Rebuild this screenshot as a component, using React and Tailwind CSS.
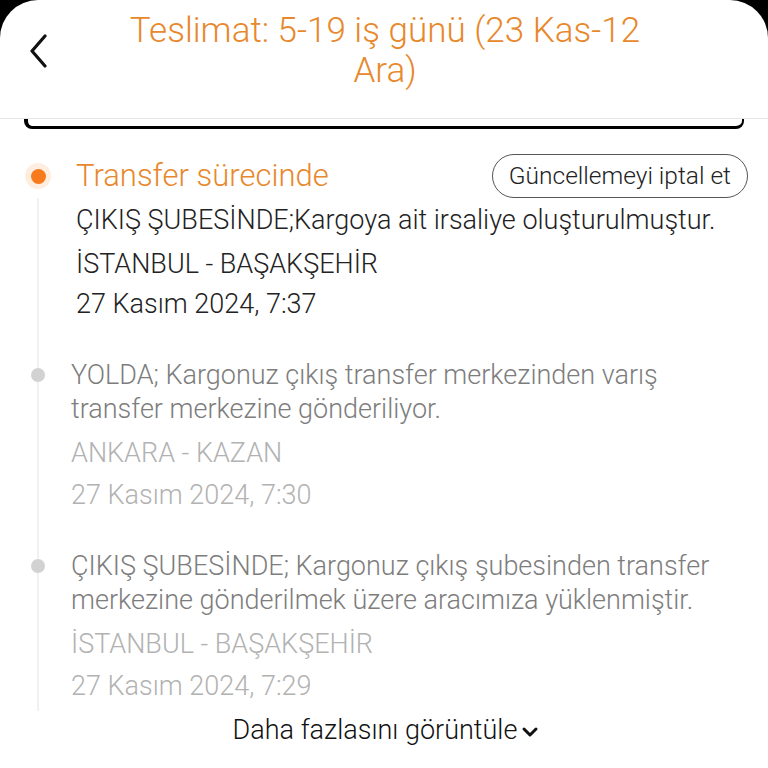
import React from "react";

const EVENTS = [
  {
    desc: ["ÇIKIŞ ŞUBESİNDE;Kargoya ait irsaliye oluşturulmuştur."],
    place: "İSTANBUL - BAŞAKŞEHİR",
    date: "27 Kasım 2024, 7:37",
  },
  {
    desc: ["YOLDA; Kargonuz çıkış transfer merkezinden varış", "transfer merkezine gönderiliyor."],
    place: "ANKARA - KAZAN",
    date: "27 Kasım 2024, 7:30",
  },
  {
    desc: ["ÇIKIŞ ŞUBESİNDE; Kargonuz çıkış şubesinden transfer", "merkezine gönderilmek üzere aracımıza yüklenmiştir."],
    place: "İSTANBUL - BAŞAKŞEHİR",
    date: "27 Kasım 2024, 7:29",
  },
];

function BackIcon() {
  return (
    <svg width="20" height="34" viewBox="0 0 20 34" fill="none">
      <path d="M16 2 L3 17 L16 32" stroke="#111" strokeWidth="3.2" strokeLinecap="round" strokeLinejoin="round" />
    </svg>
  );
}

function ChevronDown() {
  return (
    <svg width="18" height="12" viewBox="0 0 18 12" fill="none">
      <path d="M3 3 L9 9 L15 3" stroke="#111" strokeWidth="3" strokeLinecap="round" strokeLinejoin="round" />
    </svg>
  );
}

export default function App() {
  const [first, ...rest] = EVENTS;
  return (
    <div className="h-[768px] w-[768px] overflow-hidden bg-black font-['Roboto','Noto_Sans',sans-serif] font-light">
      <div className="flex h-full flex-col overflow-hidden rounded-t-[38px] bg-white">
        {/* header */}
        <div className="relative flex h-[119px] shrink-0 items-center justify-center border-b border-[#e6e6e6]">
          <div className="absolute top-[34px] left-[29px]">
            <BackIcon />
          </div>
          <h1 className="mb-[16px] w-[540px] pl-[2px] text-center text-[35px] leading-[40px] font-light text-[#e8882c]">
            Teslimat: 5-19 iş günü (23 Kas-12 Ara)
          </h1>
        </div>

        {/* bottom of the card above */}
        <div className="mx-[24px] h-[10px] shrink-0 rounded-b-[8px] border-r-2 border-b-[3px] border-l-[4px] border-black" />

        {/* timeline */}
        <div className="flex flex-col pt-[25px]">
          <div className="flex">
            <div className="flex w-[76px] shrink-0 flex-col items-center self-stretch">
              <div className="flex h-[44px] items-center">
                <div className="flex h-[26px] w-[26px] items-center justify-center rounded-full bg-[#fdeee0]">
                  <div className="h-[15px] w-[15px] rounded-full bg-[#f77b1c]" />
                </div>
              </div>
              <div className="w-[2px] flex-1 bg-[#f1f1f1]" />
            </div>
            <div className="flex-1 pr-[20px] pb-[32px]">
              <div className="flex h-[44px] items-center justify-between">
                <span className="text-[31px] text-[#e8882c]">Transfer sürecinde</span>
                <button className="h-[44px] rounded-full border border-[#555] px-[16px] text-[24.5px] text-[#222]">
                  Güncellemeyi iptal et
                </button>
              </div>
              {first.desc.map((l) => (
                <p key={l} className="text-[27px] leading-[44px] text-[#222]">{l}</p>
              ))}
              <p className="text-[27px] leading-[44px] text-[#222]">{first.place}</p>
              <p className="-mt-[4px] text-[27px] leading-[44px] text-[#222]">{first.date}</p>
            </div>
          </div>

          {rest.map((e, i) => (
            <div key={i} className="flex">
              <div className="w-[71px] shrink-0 self-stretch">
                <div className="flex h-full w-[76px] flex-col items-center">
                  <div className="w-[2px] shrink-0 basis-[10px] bg-[#f1f1f1]" />
                  <div className="h-[14px] w-[14px] shrink-0 rounded-full bg-[#d2d2d2]" />
                  <div className={"w-[2px] flex-1 bg-[#f1f1f1] " + (i === 1 ? "mb-[-8px]" : "")} />
                </div>
              </div>
              <div className={"flex-1 pr-[20px] " + (i === 0 ? "pb-[37px]" : "pb-0")}>
                {e.desc.map((l) => (
                  <p key={l} className="text-[27px] leading-[34px] text-[#7d7d7d]">{l}</p>
                ))}
                <p className="mt-[10px] text-[27px] leading-[34px] text-[#b2b2b2]">{e.place}</p>
                <p className="mt-[8px] text-[27px] leading-[34px] text-[#b2b2b2]">{e.date}</p>
              </div>
            </div>
          ))}

          <div className="mt-[10px] flex items-center justify-center gap-[4px] pl-[4px]">
            <span className="text-[27px] leading-[34px] text-[#111]">Daha fazlasını görüntüle</span>
            <span className="pt-[4px]">
              <ChevronDown />
            </span>
          </div>
        </div>
      </div>
    </div>
  );
}
